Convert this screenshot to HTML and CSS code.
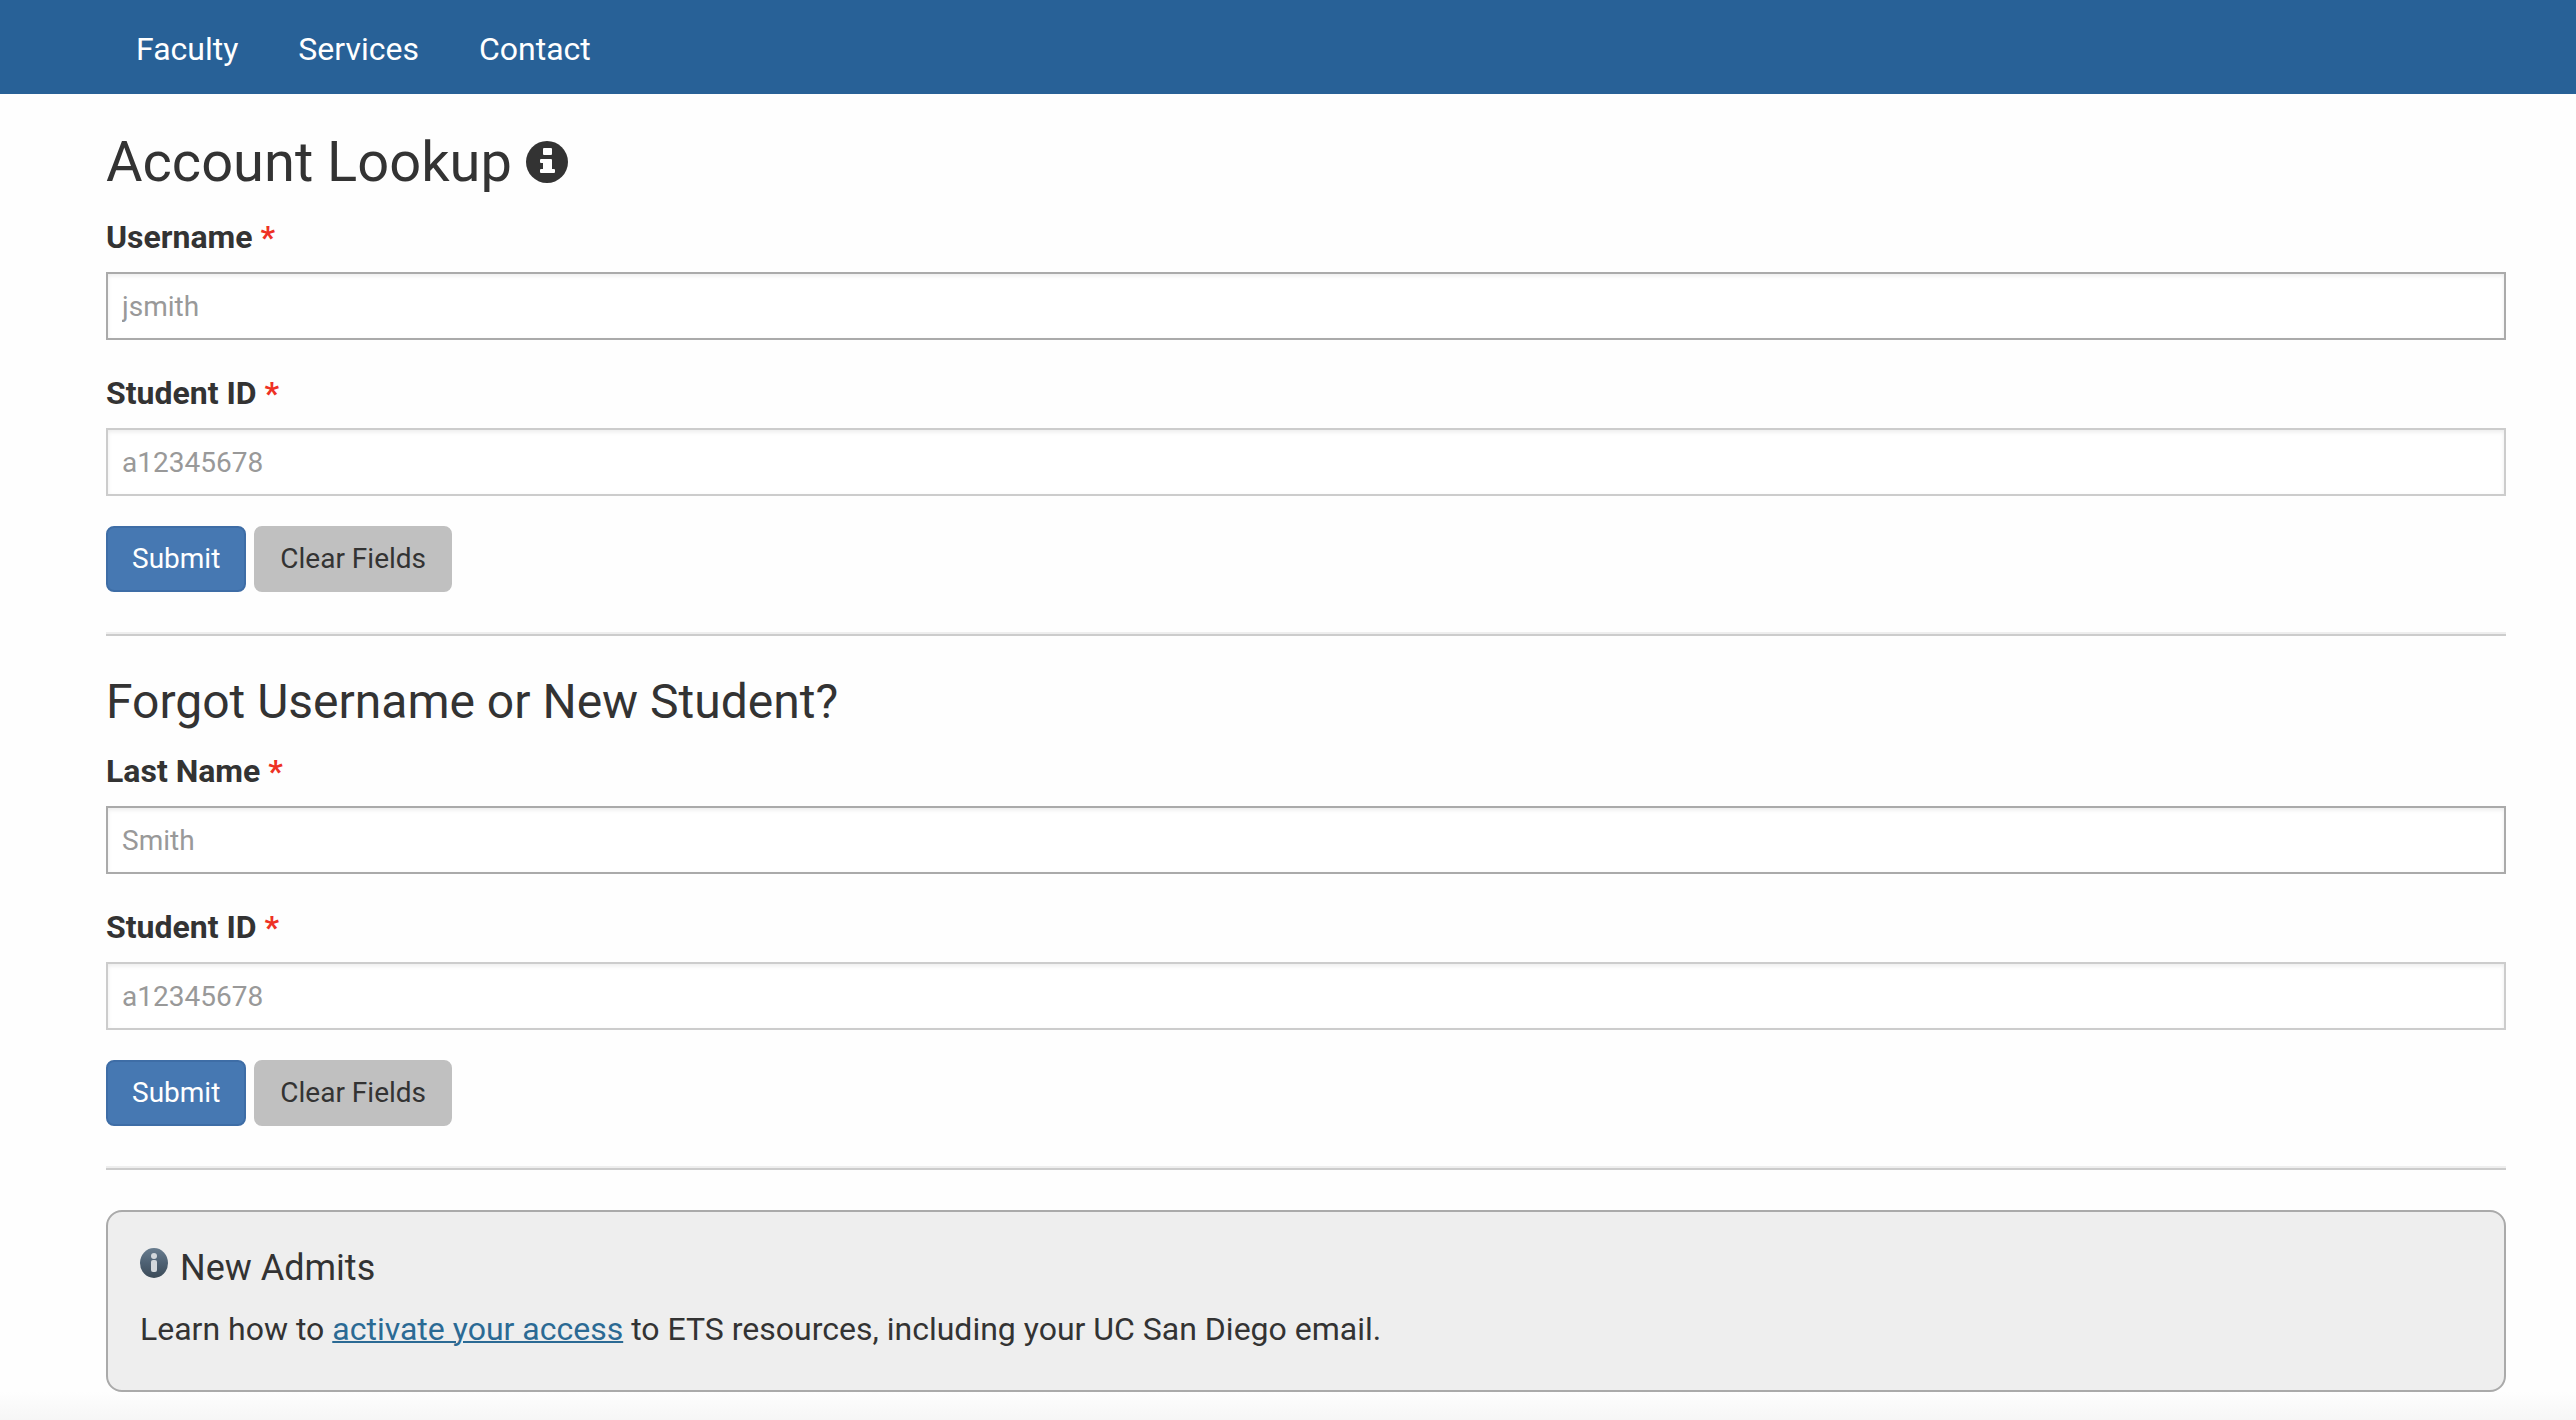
FILE: index.html
```html
<!DOCTYPE html>
<html lang="en">
<head>
  <meta charset="utf-8">
  <meta name="viewport" content="width=device-width, initial-scale=1">
  <title>Account Lookup</title>
  <link rel="stylesheet" href="styles.css">
</head>
<body>
  <header class="site-header">
    <nav class="site-nav" aria-label="Main">
      <a class="nav-link" href="#">Faculty</a>
      <a class="nav-link" href="#">Services</a>
      <a class="nav-link" href="#">Contact</a>
    </nav>
  </header>

  <main class="content">
    <section>
      <h1 class="page-title">Account Lookup
        <svg class="title-icon" viewBox="0 0 42 42" aria-hidden="true">
          <circle cx="21" cy="21" r="21" fill="#333"/>
          <path fill="#fff" d="M18 7h7a1 1 0 0 1 1 1v5a1 1 0 0 1-1 1h-7a1 1 0 0 1-1-1V8a1 1 0 0 1 1-1zM15 18h10a1 1 0 0 1 1 1v9h2a1 1 0 0 1 1 1v2a1 1 0 0 1-1 1H15a1 1 0 0 1-1-1v-2a1 1 0 0 1 1-1h2v-6h-2a1 1 0 0 1-1-1v-2a1 1 0 0 1 1-1z"/>
        </svg>
      </h1>
      <form>
        <div class="field">
          <label class="label" for="username">Username <span class="required">*</span></label>
          <input class="input input-strong" id="username" type="text" placeholder="jsmith">
        </div>
        <div class="field">
          <label class="label" for="student-id">Student ID <span class="required">*</span></label>
          <input class="input" id="student-id" type="text" placeholder="a12345678">
        </div>
        <div class="actions">
          <button class="button button-primary" type="submit">Submit</button>
          <button class="button" type="reset">Clear Fields</button>
        </div>
      </form>
    </section>

    <hr class="divider">

    <section>
      <h2 class="section-title">Forgot Username or New Student?</h2>
      <form>
        <div class="field">
          <label class="label" for="last-name">Last Name <span class="required">*</span></label>
          <input class="input input-strong" id="last-name" type="text" placeholder="Smith">
        </div>
        <div class="field">
          <label class="label" for="new-student-id">Student ID <span class="required">*</span></label>
          <input class="input" id="new-student-id" type="text" placeholder="a12345678">
        </div>
        <div class="actions">
          <button class="button button-primary" type="submit">Submit</button>
          <button class="button" type="reset">Clear Fields</button>
        </div>
      </form>
    </section>

    <hr class="divider">

    <aside class="notice">
      <h3 class="notice-title">
        <svg class="notice-icon" viewBox="0 0 28 30" aria-hidden="true">
          <defs>
            <linearGradient id="badge" x1="0" y1="0" x2="0" y2="1">
              <stop offset="0" stop-color="#687c8e"/>
              <stop offset="0.5" stop-color="#4e6173"/>
              <stop offset="1" stop-color="#3c4b58"/>
            </linearGradient>
          </defs>
          <ellipse cx="14" cy="15" rx="14" ry="15" fill="url(#badge)"/>
          <circle cx="14" cy="8" r="3" fill="#d3d8dc"/>
          <rect x="11" y="12" width="6" height="12" rx="2" fill="#d3d8dc"/>
        </svg>
        New Admits
      </h3>
      <p class="notice-text">Learn how to <a class="link" href="#">activate your access</a> to ETS resources, including your UC San Diego email.</p>
    </aside>
  </main>
  <footer class="page-end"></footer>
</body>
</html>
```
FILE: styles.css
```css
* {
  box-sizing: border-box;
}

body {
  display: flex;
  flex-direction: column;
  min-height: 100vh;
  margin: 0;
  background: #fefefe;
  color: #333;
  font-family: Roboto, "Liberation Sans", sans-serif;
  font-size: 32px;
  line-height: 46px;
}

.site-header {
  padding: 0 106px;
  background: #286197;
}

.site-nav {
  display: flex;
  flex-wrap: wrap;
}

.nav-link {
  padding: 26px 30px 22px;
  color: #fff;
  text-decoration: none;
}

.content {
  padding: 38px 70px 0 106px;
}

.page-title,
.section-title,
.notice-title {
  margin: 0;
  font-weight: 400;
}

.page-title {
  display: flex;
  align-items: center;
  gap: 14px;
  margin-bottom: 22px;
  font-size: 56px;
  line-height: 60px;
}

.title-icon {
  width: 42px;
  height: 42px;
}

.section-title {
  margin-bottom: 20px;
  font-size: 48px;
  line-height: 52px;
}

.field {
  margin-bottom: 30px;
}

.label {
  display: block;
  margin-bottom: 12px;
  font-weight: 700;
}

.required {
  color: #ee3124;
}

.input {
  display: block;
  width: 100%;
  height: 68px;
  padding: 0 14px;
  border: 2px solid #ccc;
  border-radius: 0;
  background: #fff;
  box-shadow: inset 0 2px 4px rgba(0, 0, 0, 0.08);
  color: #333;
  font-family: inherit;
  font-size: 28px;
}

.input-strong {
  border-color: #aaa;
}

.input::placeholder {
  color: #999;
  opacity: 1;
}

.actions {
  display: flex;
  gap: 8px;
}

.button {
  height: 66px;
  padding: 0 24px 2px;
  border: 2px solid #c0c0c0;
  border-radius: 8px;
  background: #c0c0c0;
  color: #333;
  font-family: inherit;
  font-size: 28px;
}

.button-primary {
  border-color: #3e6da6;
  background: #4678b2;
  color: #fff;
}

.divider {
  height: 4px;
  margin: 40px 0;
  border: 0;
  border-top: 2px solid #eee;
  border-bottom: 2px solid #ccc;
}

.notice {
  padding: 34px 32px 38px;
  border: 2px solid #aaa;
  border-radius: 16px;
  background: #eee;
}

.notice-title {
  display: flex;
  align-items: flex-start;
  gap: 12px;
  margin-bottom: 16px;
  font-size: 36px;
  line-height: 44px;
}

.notice-icon {
  width: 28px;
  height: 30px;
  margin-top: 2px;
}

.notice-text {
  margin: 0;
}

.link {
  color: #2b6a94;
  text-decoration: underline;
  text-decoration-thickness: 2px;
}

.page-end {
  flex: 1;
  min-height: 28px;
  background: linear-gradient(#fefefe, #f6f6f6);
}
```
